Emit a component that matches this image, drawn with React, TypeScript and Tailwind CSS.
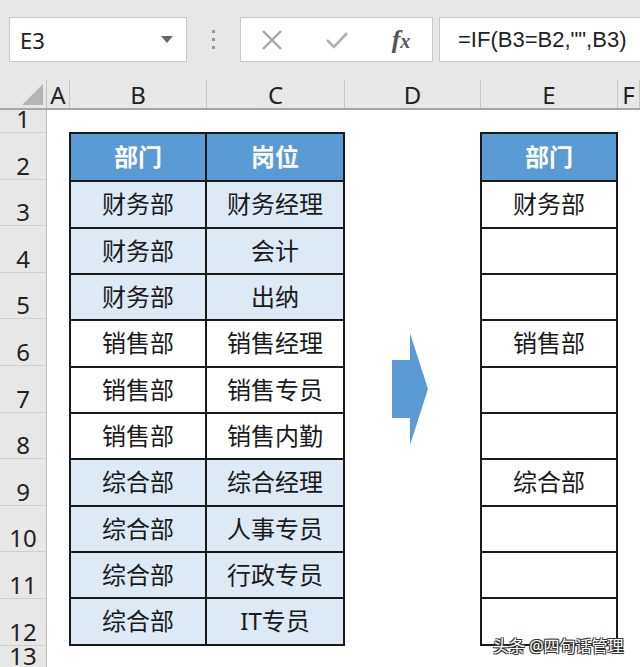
import React from "react";

const rowsB: { d: string; p: string; shade: boolean }[] = [
  { d: "财务部", p: "财务经理", shade: true },
  { d: "财务部", p: "会计", shade: true },
  { d: "财务部", p: "出纳", shade: true },
  { d: "销售部", p: "销售经理", shade: false },
  { d: "销售部", p: "销售专员", shade: false },
  { d: "销售部", p: "销售内勤", shade: false },
  { d: "综合部", p: "综合经理", shade: true },
  { d: "综合部", p: "人事专员", shade: true },
  { d: "综合部", p: "行政专员", shade: true },
  { d: "综合部", p: "IT专员", shade: true },
];

const rowsE = ["财务部", "", "", "销售部", "", "", "综合部", "", "", ""];

const cjk = "font-['Noto_Sans','Noto_Sans_CJK_SC',sans-serif]";

export default function App() {
  const rowNums = ["1", "2", "3", "4", "5", "6", "7", "8", "9", "10", "11", "12"];
  return (
    <div className={`relative w-[640px] h-[667px] overflow-hidden bg-white ${cjk}`}>
      {/* Toolbar */}
      <div className="h-[80px] bg-[#e7e7e7] flex items-start pt-[17px] overflow-hidden">
        <div className="shrink-0 ml-[9px] w-[178px] h-[45px] bg-white border border-[#c8c8c8] flex items-center justify-between pl-[10px] pr-[13px]">
          <span className="text-[22px] text-[#222] leading-none">E3</span>
          <svg width="12" height="7" viewBox="0 0 12 7">
            <polygon points="0,0 12,0 6,7" fill="#666" />
          </svg>
        </div>
        <div className="shrink-0 w-[53px] h-[45px] flex flex-col items-center justify-center gap-[5px]">
          <span className="w-[3px] h-[3px] bg-[#9a9a9a]" />
          <span className="w-[3px] h-[3px] bg-[#9a9a9a]" />
          <span className="w-[3px] h-[3px] bg-[#9a9a9a]" />
        </div>
        <div className="shrink-0 w-[193px] h-[45px] bg-white border border-[#c8c8c8] flex items-center">
          <div className="w-[62px] flex justify-center">
            <svg width="22" height="22" viewBox="0 0 22 22">
              <path d="M2 2 L20 20 M20 2 L2 20" stroke="#a8a8a8" strokeWidth="2.4" fill="none" />
            </svg>
          </div>
          <div className="w-[68px] flex justify-center">
            <svg width="24" height="20" viewBox="0 0 24 20">
              <path d="M2 10 L9 17 L22 3" stroke="#b0b0b0" strokeWidth="2.6" fill="none" />
            </svg>
          </div>
          <div className="w-[60px] flex justify-center">
            <span className="font-['Liberation_Serif',serif] italic font-bold text-[26px] text-[#555] leading-none">
              f<span className="text-[20px]">x</span>
            </span>
          </div>
        </div>
        <div className="shrink-0 ml-[6px] w-[240px] h-[45px] bg-white border border-[#c8c8c8] flex items-center pl-[18px]">
          <span className="font-['Liberation_Sans',sans-serif] text-[22px] text-[#222] leading-none whitespace-nowrap">
            =IF(B3=B2,"",B3)
          </span>
        </div>
      </div>

      {/* Column headers */}
      <div className="h-[30px] bg-[#e7e7e7] border-b-2 border-[#a6a6a6] grid grid-cols-[47px_23px_137px_138px_136px_137px_22px] text-[24px] text-[#222] leading-none">
        <div className="relative border-r border-[#c6c6c6]">
          <svg className="absolute left-[22px] top-[4px]" width="21" height="21" viewBox="0 0 21 21">
            <polygon points="0,21 21,21 21,0" fill="#b4b4b4" />
          </svg>
        </div>
        {["A", "B", "C", "D", "E", "F"].map((c) => (
          <div key={c} className="border-r border-[#c6c6c6] flex items-center justify-center pt-[2px]">
            {c}
          </div>
        ))}
      </div>

      {/* Sheet body */}
      <div className="grid grid-cols-[47px_23px_137px_138px_136px_137px_22px] grid-rows-[23px_repeat(11,46.6px)_21px]">
        {rowNums.map((n, i) => (
          <div
            key={n}
            style={{ gridColumn: 1, gridRow: i + 1 }}
            className="bg-[#e7e7e7] border-r border-b border-r-[#bdbdbd] border-b-[#cfcfcf] flex items-end justify-center text-[24px] leading-[20px] text-[#222] pb-[3px]"
          >
            {n}
          </div>
        ))}
        <div className="col-start-1 row-start-13 bg-[#e7e7e7] border-r border-[#bdbdbd] flex items-end justify-center text-[24px] leading-[20px] text-[#222] pb-[1px]">
          13
        </div>

        {/* Table B:C */}
        <div className="col-start-3 col-end-5 row-start-2 row-end-13 -ml-[1px] -mt-[1px] border-2 border-[#1a1a1a] grid grid-cols-2 grid-rows-11 text-[24px] text-[#1a1a1a]">
          <div className="bg-[#5b9bd5] border-r-2 border-[#1a1a1a] flex items-center justify-center font-bold text-white">部门</div>
          <div className="bg-[#5b9bd5] flex items-center justify-center font-bold text-white">岗位</div>
          {rowsB.map((r, i) => (
            <React.Fragment key={i}>
              <div className={`${r.shade ? "bg-[#dde9f5]" : "bg-white"} border-t-2 border-r-2 border-[#1a1a1a] flex items-center justify-center`}>
                {r.d}
              </div>
              <div className={`${r.shade ? "bg-[#dde9f5]" : "bg-white"} border-t-2 border-[#1a1a1a] flex items-center justify-center`}>
                {r.p}
              </div>
            </React.Fragment>
          ))}
        </div>

        {/* Arrow */}
        <div className="col-start-5 row-start-6 row-end-9 flex items-center justify-center pr-[6px]">
          <svg width="36" height="112" viewBox="0 0 36 112">
            <polygon points="0,27 18,27 18,0 36,56 18,112 18,85 0,85" fill="#5b9bd5" />
          </svg>
        </div>

        {/* Table E */}
        <div className="col-start-6 col-end-7 row-start-2 row-end-13 -ml-[1px] -mt-[1px] border-2 border-[#1a1a1a] grid grid-rows-11 text-[24px] text-[#1a1a1a]">
          <div className="bg-[#5b9bd5] flex items-center justify-center font-bold text-white">部门</div>
          {rowsE.map((v, i) => (
            <div key={i} className="bg-white border-t-2 border-[#1a1a1a] flex items-center justify-center">
              {v}
            </div>
          ))}
        </div>
      </div>

      {/* Watermark */}
      <div className="absolute left-[493px] top-[638px] text-[16px] leading-none text-white whitespace-nowrap [text-shadow:-1px_-1px_0_#333,1px_-1px_0_#333,-1px_1px_0_#333,1px_1px_0_#333]">
        头条 @四句话管理
      </div>
    </div>
  );
}
